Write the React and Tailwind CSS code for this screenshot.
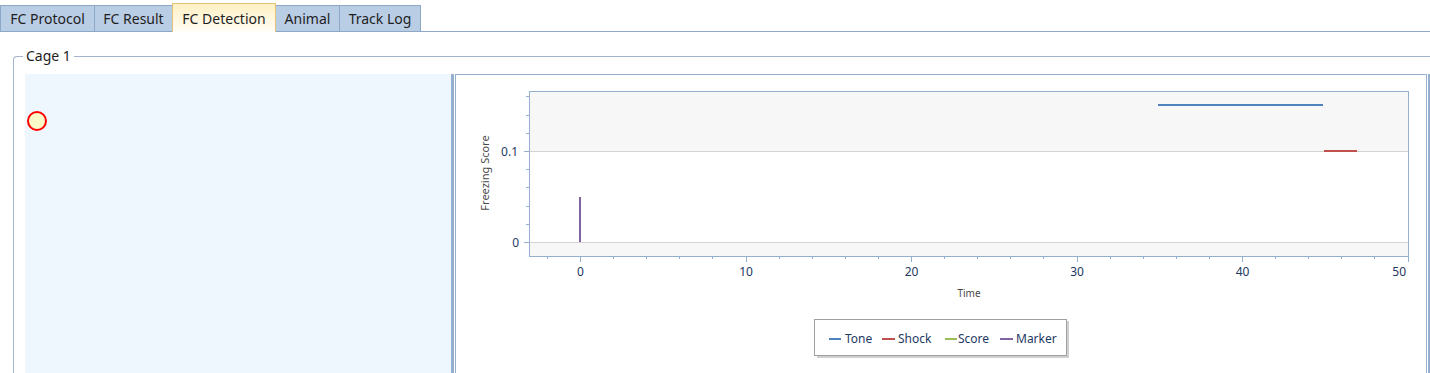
import React from "react";

const tabs = [
  { name: "FC Protocol", w: "w-[95px]" },
  { name: "FC Result", w: "w-[79px]" },
  { name: "FC Detection", w: "w-[104px]", active: true },
  { name: "Animal", w: "w-[65px]" },
  { name: "Track Log", w: "w-[82px]" },
];

const X0 = 580.5;
const PX = 16.55;
const xOf = (t) => X0 + t * PX;

function Chart() {
  const minorY = [96.4, 114.6, 132.8, 169.2, 187.4, 205.6, 223.8];
  const majorX = [0, 10, 20, 30, 40, 50];
  const minorX = [];
  for (let t = -2; t <= 50; t += 2) if (t % 10 !== 0) minorX.push(t);
  const axis = "#95AFCF";
  const label = "#1E3A63";

  return (
    <svg width="970" height="298" viewBox="456 75 970 298" className="block" fontFamily="'Noto Sans', 'Open Sans', sans-serif">
      {/* plot bands */}
      <rect x="529.5" y="91.5" width="879" height="60" fill="#F7F7F7" />
      <rect x="529.5" y="151.5" width="879" height="91" fill="#FFFFFF" />
      <rect x="529.5" y="242.5" width="879" height="14" fill="#F7F7F7" />
      <line x1="529" y1="151.5" x2="1409" y2="151.5" stroke="#D3D3D3" />
      <line x1="529" y1="242.5" x2="1409" y2="242.5" stroke="#D3D3D3" />
      <rect x="529.5" y="91.5" width="879" height="165" fill="none" stroke={axis} />

      {/* y ticks */}
      {minorY.map((y) => (
        <line key={y} x1="526" y1={Math.round(y) + 0.5} x2="529" y2={Math.round(y) + 0.5} stroke={axis} />
      ))}
      <line x1="524" y1="151.5" x2="529" y2="151.5" stroke={axis} />
      <line x1="524" y1="242.5" x2="529" y2="242.5" stroke={axis} />
      <text x="518" y="155.5" textAnchor="end" fontSize="12" fill={label}>0.1</text>
      <text x="519" y="246.5" textAnchor="end" fontSize="12" fill={label}>0</text>

      {/* x ticks */}
      {minorX.map((t) => (
        <line key={t} x1={Math.floor(xOf(t)) + 0.5} y1="256" x2={Math.floor(xOf(t)) + 0.5} y2="259" stroke={axis} />
      ))}
      {majorX.map((t) => (
        <g key={t}>
          <line x1={Math.floor(xOf(t)) + 0.5} y1="256" x2={Math.floor(xOf(t)) + 0.5} y2="262" stroke={axis} />
          {t === 50 ? (
            <text x="1406" y="276" textAnchor="end" fontSize="12" fill={label}>{t}</text>
          ) : (
            <text x={xOf(t)} y="276" textAnchor="middle" fontSize="12" fill={label}>{t}</text>
          )}
        </g>
      ))}

      {/* axis titles */}
      <text x="969" y="297" textAnchor="middle" fontSize="10" fill="#4A4A4A">Time</text>
      <text transform="translate(489 173) rotate(-90)" textAnchor="middle" fontSize="11" fill="#4A4A4A">Freezing Score</text>

      {/* series */}
      <line x1="1158" y1="105" x2="1323" y2="105" stroke="#4F81BD" strokeWidth="2" />
      <line x1="1324" y1="151" x2="1357" y2="151" stroke="#C0504D" strokeWidth="2" />
      <line x1="580" y1="197" x2="580" y2="242" stroke="#8064A2" strokeWidth="2" />

      {/* legend */}
      <rect x="817" y="321" width="252" height="37" fill="#D0D0D0" />
      <rect x="814.5" y="319.5" width="252" height="36" fill="#FFFFFF" stroke="#A0A0A0" />
      <line x1="829" y1="339" x2="841" y2="339" stroke="#4F81BD" strokeWidth="2" />
      <text x="845" y="343" fontSize="12" fill={label}>Tone</text>
      <line x1="882" y1="339" x2="895" y2="339" stroke="#C0504D" strokeWidth="2" />
      <text x="898" y="343" fontSize="12" fill={label}>Shock</text>
      <line x1="945" y1="339" x2="957" y2="339" stroke="#9BBB59" strokeWidth="2" />
      <text x="958" y="343" fontSize="12" fill={label}>Score</text>
      <line x1="1000" y1="339" x2="1013" y2="339" stroke="#8064A2" strokeWidth="2" />
      <text x="1016" y="343" fontSize="12" fill={label}>Marker</text>
    </svg>
  );
}

export default function App() {
  return (
    <div className="w-[1430px] h-[373px] overflow-hidden bg-white font-['Noto_Sans','Open_Sans',sans-serif] text-[#1E1E1E]">
      {/* tab strip */}
      <div className="flex h-[32px] items-end">
        {tabs.map((t) =>
          t.active ? (
            <div
              key={t.name}
              className={`${t.w} shrink-0 -ml-px h-[29px] flex items-center justify-center border border-b-0 border-[#E2C377] bg-gradient-to-b from-[#FFF0C2] to-[#FFFDF6] text-[14px] relative z-10`}
            >
              {t.name}
            </div>
          ) : (
            <div
              key={t.name}
              className={`${t.w} shrink-0 -ml-px first:ml-0 h-[27px] flex items-center justify-center border border-[#8EA8C8] bg-[#B9CDE5] text-[14px]`}
            >
              {t.name}
            </div>
          )
        )}
        <div className="flex-1 border-b border-[#8EA8C8]" />
      </div>

      {/* group box */}
      <div className="pt-[24px] pl-[13px]">
        <div className="h-[317px] border-t border-l border-[#A3B5CC] rounded-tl-[4px]">
          <div className="-mt-[10px] ml-[9px] w-fit bg-white px-[3px] text-[14px] leading-[18px]">Cage 1</div>
          <div className="mt-[9px] ml-[11px] flex h-[300px]">
            <div className="w-[426px] shrink-0 bg-[#EEF6FE] pt-[37px] pl-[2px]">
              <div className="w-[20px] h-[20px] rounded-full border-2 border-[#FF0000] bg-[#FAFAC8]" />
            </div>
            <div className="w-[3px] shrink-0 bg-[#95AFCF]" />
            <div className="w-px shrink-0 bg-white" />
            <div className="w-[972px] shrink-0 border-l border-t border-r border-[#95AFCF]">
              <Chart />
            </div>
            <div className="w-px shrink-0 bg-white" />
            <div className="w-[3px] shrink-0 bg-[#95AFCF]" />
          </div>
        </div>
      </div>
    </div>
  );
}
